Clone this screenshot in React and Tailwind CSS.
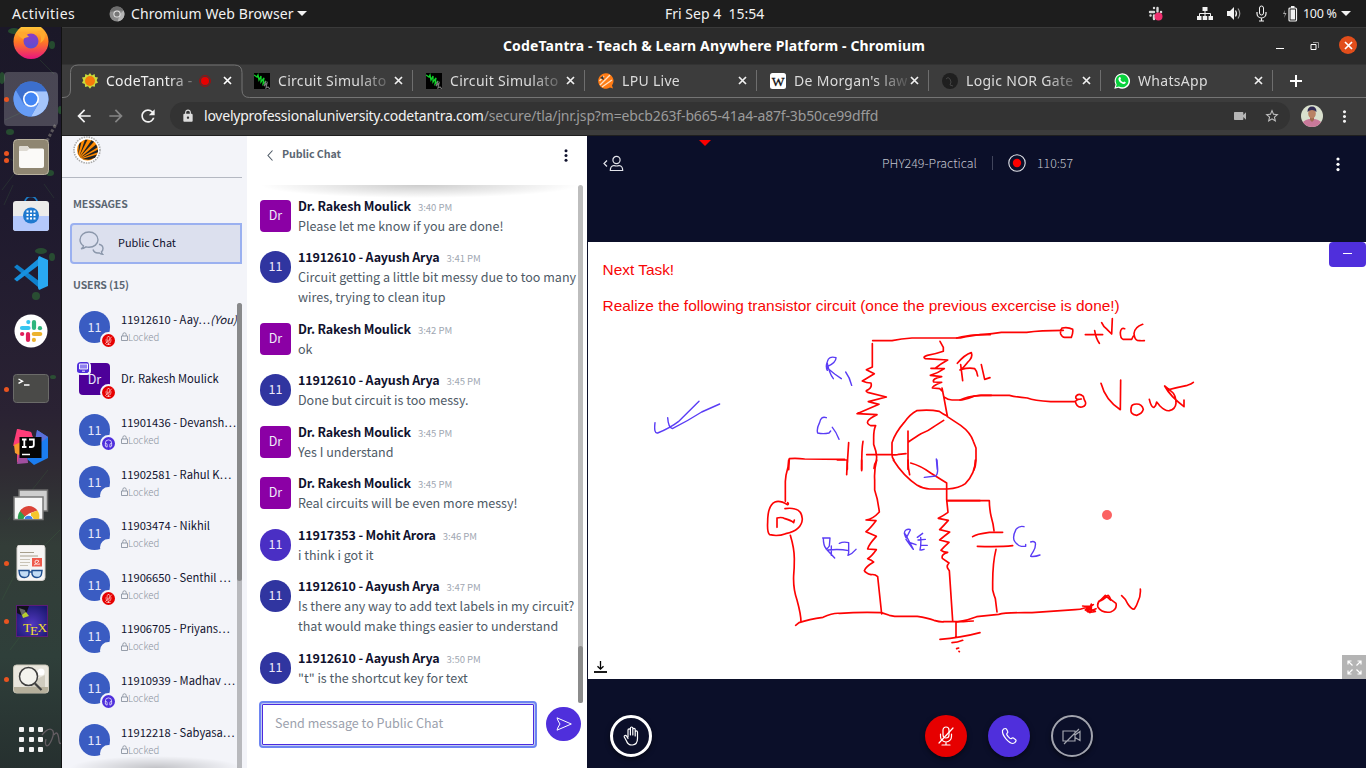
import React from "react";
import { MdArrowBack, MdArrowForward, MdRefresh, MdLock, MdVideocam, MdStarBorder, MdMoreVert } from "react-icons/md";

/* ---------- dock ---------- */
const Cell = ({ children, dots = 0, active }) => (
  <div className="relative flex h-[58px] w-[62px] shrink-0 items-center justify-center">
    {active && <div className="absolute left-1 top-0.5 h-[54px] w-[54px] rounded bg-white/20" />}
    {dots > 0 && (
      <div className="absolute inset-y-0 left-1 flex flex-col items-center justify-center gap-[2px]">
        {Array.from({ length: dots }, (_, i) => (
          <span key={i} className="h-[5px] w-[5px] rounded-full bg-[#e95420]" />
        ))}
      </div>
    )}
    <svg className="relative h-9 w-9" viewBox="0 0 36 36">{children}</svg>
  </div>
);

const Dock = () => (
  <div className="relative w-[62px] shrink-0 overflow-hidden border-r border-[#111] bg-[linear-gradient(180deg,#1b1828_0%,#1f1a2e_25%,#2a2233_52%,#2f2b33_60%,#333d38_70%,#2f3f3a_85%,#26302f_100%)]">
    <svg className="absolute inset-0" width="62" height="741" viewBox="0 27 62 741">
      <g fill="#2f7d35" opacity=".5">
        <ellipse cx="14" cy="31" rx="6" ry="3" /><ellipse cx="52" cy="45" rx="3" ry="4" />
        <ellipse cx="2" cy="78" rx="3" ry="6" /><ellipse cx="60" cy="110" rx="2" ry="4" />
        <ellipse cx="10" cy="132" rx="4" ry="3" /><ellipse cx="50" cy="173" rx="4" ry="3" />
        <ellipse cx="41" cy="251" rx="6" ry="3" /><ellipse cx="52" cy="257" rx="3" ry="4" />
        <ellipse cx="36" cy="296" rx="4" ry="4" /><ellipse cx="53" cy="377" rx="3" ry="2" />
      </g>
      <g stroke="#3e6a3f" strokeWidth="1" opacity=".25" fill="none">
        <path d="M2 190l12-16M5 120l22-10M8 158l16 8M4 205l9-20M40 60l14 14M44 184l10 14M8 520l40-50M2 600l30-60M10 650l30-40M30 560l30-30" />
      </g>
      <path d="M47 141l4-8 5-9" stroke="#827e7a" strokeWidth="3" strokeDasharray="3 2" fill="none" opacity=".6" />
      <path d="M42 735c8-10 14-6 10 4s-8 8-6 0M54 735q4-6 5 6 1 6 4-2" stroke="#7d6f78" strokeWidth="1.300" fill="none" opacity=".7" />
    </svg>
    <div className="relative -mt-[15px] flex flex-col">
      <Cell>
        <defs>
          <linearGradient id="ff" x1="0" y1="0" x2="0" y2="1"><stop offset="0" stopColor="#ffd53d" /><stop offset=".5" stopColor="#ff7a22" /><stop offset="1" stopColor="#e8147f" /></linearGradient>
          <linearGradient id="fp" x1="0" y1="0" x2="0" y2="1"><stop offset="0" stopColor="#8d3cc4" /><stop offset="1" stopColor="#5a4fd0" /></linearGradient>
        </defs>
        <circle cx="18" cy="18.500" r="17.500" fill="url(#ff)" />
        <circle cx="18" cy="18" r="7.500" fill="url(#fp)" />
        <path d="M4 9c5 0 9 1 12 5-3 0-4 1-6 2-2-1-5-3-6-7zM24 8c4 3 5 8 3 12 5-2 6-8 4-13z" fill="#ffa92e" />
      </Cell>
      <Cell dots={1} active>
        <circle cx="18" cy="18" r="17.500" fill="#4d86e8" />
        <path d="M18 .5A17.500 17.500 0 0 0 2.800 9.300L10.500 22 18 10.500h15.800A17.500 17.500 0 0 0 18 .5z" fill="#3c6fcd" />
        <path d="M33.800 10.500H18l7.500 12L18 35.500A17.500 17.500 0 0 0 33.800 10.500z" fill="#a5c5fb" />
        <path d="M2.800 9.300a17.500 17.500 0 0 0 15.200 26.200l6.500-11.500H11z" fill="#669bf5" />
        <circle cx="18" cy="18" r="8" fill="#fff" /><circle cx="18" cy="18" r="6.400" fill="#4285f4" />
      </Cell>
      <Cell dots={2}>
        <rect x=".5" y=".5" width="35" height="35" rx="4" fill="#8f8672" stroke="#b9b29f" />
        <path d="M6 8.500q0-1.500 1.500-1.500h7l2 2.500h13q1.500 0 1.500 1.500v16q0 2-2 2H8q-2 0-2-2z" fill="#fbfaf8" />
        <path d="M6 12V8.500Q6 7 7.500 7h7l2 2.500-2.500 2.500z" fill="#dedad2" />
      </Cell>
      <Cell>
        <path d="M12 5a6 5.500 0 0 1 12 0" fill="none" stroke="#1c7dc8" strokeWidth="1.600" />
        <rect x="0" y="4" width="36" height="30" rx="3" fill="#ecebea" />
        <path d="M0 19h36v12q0 3-3 3H3q-3 0-3-3z" fill="#b4c8fb" />
        <circle cx="18" cy="18.500" r="8" fill="#1f79cf" />
        <g fill="#fff">{[14, 17.500, 21].map((y) => [14, 17.500, 21].map((x) => <rect key={x + "-" + y} x={x - 0.5} y={y - 0.5} width="2" height="2" />))}</g>
      </Cell>
      <Cell>
        <path d="M1 12l3-2.500 24 18v7z" fill="#0f80cc" />
        <path d="M1 24l3 2.500 24-18v-7z" fill="#1791df" />
        <path d="M26 1l9 4v26l-9 4-1-2V3z" fill="#29a9f2" />
      </Cell>
      <Cell>
        <circle cx="18" cy="18" r="16.500" fill="#fff" />
        <g strokeWidth="4.200" strokeLinecap="round">
          <path d="M9 15h6.500" stroke="#36c5f0" /><path d="M15.300 9v.1" stroke="#36c5f0" />
          <path d="M21 9v6" stroke="#2eb67d" /><path d="M26.900 15.200h.1" stroke="#2eb67d" />
          <path d="M20.800 21h6.400" stroke="#ecb22e" /><path d="M20.900 26.900v.1" stroke="#ecb22e" />
          <path d="M15 21v6" stroke="#e01e5a" /><path d="M9.100 21h.1" stroke="#e01e5a" />
        </g>
      </Cell>
      <Cell dots={1}>
        <rect x=".5" y="3.500" width="35" height="28" rx="3" fill="#4a4a48" stroke="#6b6b69" />
        <path d="M5.500 8l4 2.200-4 2.200M11 14h5.500" stroke="#fff" strokeWidth="1.400" fill="none" />
      </Cell>
      <Cell>
        <path d="M4 0l14 3 3 9-17 22z" fill="#e8457f" /><path d="M4 0l14 3 2 6-20 8z" fill="#ff3d78" />
        <path d="M1 16l7-3v14l-6-3z" fill="#f59b2c" /><path d="M6 26l8-4 1 12-11 1z" fill="#a04f9f" />
        <path d="M24 1l11 7v21l-14 7-7-6 8-12z" fill="#1b7df0" /><path d="M24 1l11 7-8 6-5-3z" fill="#5b6fd8" />
        <rect x="6.500" y="8" width="22" height="21" fill="#050505" />
        <path d="M9 10.500h4.500M11.300 10.500v7.500M9 18h4.500M16 10.500h4.800v5.500q0 2-2.400 2H16" stroke="#fff" strokeWidth="1.800" fill="none" />
        <path d="M9 25.500h8" stroke="#fff" strokeWidth="1.500" />
      </Cell>
      <Cell>
        <rect x="6" y="3" width="28.500" height="21" fill="#cfcfcf" stroke="#6c6c6c" strokeWidth="1.500" />
        <rect x="1" y="10" width="29" height="22.500" fill="#f7f7f7" stroke="#777" strokeWidth="1.500" />
        <path d="M5 32a10.500 10.500 0 0 1 2.500-8.500L13 29l-1 3z" fill="#2f9e4f" />
        <path d="M7 24a10.500 10.500 0 0 1 17.500-.5l-8.500 3-4 3z" fill="#db4437" />
        <path d="M24.500 23.500a10.500 10.500 0 0 1 1.500 8.500h-8V26z" fill="#f5c52c" />
        <path d="M10.500 32a5.200 5.200 0 0 1 10 0z" fill="#fff" /><path d="M11.500 32a4.200 4.200 0 0 1 8.200 0z" fill="#3f7de8" />
      </Cell>
      <Cell dots={1}>
        <rect x="4" y="0" width="28" height="35.500" rx="3" fill="#f6f5f4" stroke="#d3d0cb" />
        <path d="M7 7.500h14M7 11h18" stroke="#a79f8c" strokeWidth="1" />
        <path d="M7 14.500h10M7 17.500h10M7 20.500h8" stroke="#c9c3b6" strokeWidth="1" />
        <rect x="19" y="13" width="10" height="8.500" fill="#ee5a4c" />
        <path d="M21 20q3-1 5-4-4-2-4 1t5 2" fill="none" stroke="#fff" strokeWidth=".8" />
        <g fill="#c2dcf5" stroke="#1d4d8e" strokeWidth="1.400"><path d="M6 25.500h10v3.500q-.5 3.500-4.500 3.500T6.500 29zM19 25.500h10l-.5 3.500q-.5 3.500-4.500 3.500T19 29z" /><path d="M16 27h3" /></g>
      </Cell>
      <Cell dots={1}>
        <defs><radialGradient id="tx" cx=".5" cy=".6" r=".7"><stop offset="0" stopColor="#5138c0" /><stop offset="1" stopColor="#19176d" /></radialGradient></defs>
        <rect x="3.500" y="2.500" width="31" height="31" fill="url(#tx)" stroke="#5c1d78" />
        <path d="M4 3h12l-4 11-8-4z" fill="#10101a" /><path d="M6 5l6 2 1 4-4 2z" fill="#666" />
        <path d="M9 12l4-3 3 4-6 2z" fill="#c7e02a" opacity=".9" />
        <g fill="#f2de2b" fontFamily="Liberation Serif, serif" fontSize="13.500"><text x="10" y="28.500">T</text><text x="17" y="32">E</text><text x="24.500" y="28.500">X</text></g>
      </Cell>
      <Cell dots={1}>
        <rect x=".5" y="4" width="35" height="28" rx="3" fill="#e9e6dd" stroke="#cbc6b8" />
        <path d="M1 26h34v3q0 3-3 3H4q-3 0-3-3z" fill="#b6b09c" /><path d="M20 20l12-6v12H18z" fill="#d0ccbf" />
        <circle cx="28" cy="11" r="3.500" fill="#fff" />
        <circle cx="15.500" cy="15.500" r="9" fill="#f4f3ee" stroke="#3f3f3f" strokeWidth="1.500" />
        <path d="M22 22.500l6.500 6.500" stroke="#3f3f3f" strokeWidth="2.200" />
      </Cell>
      <div className="mt-[19px] ml-[19px] grid w-6 grid-cols-3 gap-[5px]">
        {Array.from({ length: 9 }, (_, i) => <span key={i} className="h-[5px] w-[5px] rounded-[1px] bg-[#f2f2f2]" />)}
      </div>
    </div>
  </div>
);

/* ---------- system bar ---------- */
const TopBar = () => (
  <div className="flex h-[27px] shrink-0 items-center bg-[#1d1d1d] pr-[15px] pl-3 text-[14px] leading-[27px] text-[#f2f2f2]">
    <span className="w-[97px] tracking-[0.5px]">Activities</span>
    <svg className="mr-[6px] h-4 w-4" viewBox="0 0 16 16"><circle cx="8" cy="8" r="7.500" fill="#8a8a8a" /><path d="M.8 6A7.500 7.500 0 0 1 14.600 4.500H8z" fill="#6d6d6d" /><path d="M14.600 4.500a7.500 7.500 0 0 1-6 11L11 8z" fill="#b5b5b5" /><circle cx="8" cy="8" r="3.600" fill="#e5e5e5" /><circle cx="8" cy="8" r="2.600" fill="#777" /></svg>
    <span className="w-[166px] tracking-[0.1px]">Chromium Web Browser</span>
    <svg className="h-[5px] w-[10px]" viewBox="0 0 10 5"><path d="M0 0h10L5 5z" fill="#f2f2f2" /></svg>
    <span className="ml-[358px] whitespace-pre">Fri Sep 4  15:54</span>
    <div className="ml-auto flex items-center">
      <svg className="h-4 w-4" viewBox="0 0 16 16"><g stroke="#d8d8d8" strokeWidth="2.400" strokeLinecap="round"><path d="M6 2v.1M2 6h4M9.500 2v3.500M13 6h.1M2.500 9.500h.1M6 9.500v3.500" /></g><circle cx="10.500" cy="10.500" r="4" fill="#ef2f6e" /></svg>
      <svg className="ml-[33px] h-[15px] w-[16px]" viewBox="0 0 16 15"><g fill="#f2f2f2"><rect x="5.500" y="1" width="5" height="4" /><rect x="0" y="10" width="4.500" height="4" /><rect x="5.700" y="10" width="4.500" height="4" /><rect x="11.500" y="10" width="4.500" height="4" /></g><path d="M8 5v5M2.500 10V7.500h11V10" stroke="#f2f2f2" fill="none" /></svg>
      <svg className="ml-[13px] h-[15px] w-[16px]" viewBox="0 0 16 15"><path d="M1 5h3l4-4v13l-4-4H1z" fill="#f2f2f2" /><path d="M9.500 4.500q2 3 0 6" stroke="#f2f2f2" fill="none" strokeWidth="1.200" /><path d="M12 2.500q3.500 5 0 10" stroke="#9a9a9a" fill="none" strokeWidth="1.200" /></svg>
      <svg className="ml-[14px] h-[17px] w-[11px]" viewBox="0 0 11 17"><rect x="3.500" y="1" width="4" height="9" rx="2" fill="none" stroke="#f2f2f2" /><path d="M1 7v1.500a4.500 4.500 0 0 0 9 0V7M5.500 13v3M3 16h5" stroke="#f2f2f2" fill="none" strokeWidth="1.200" /></svg>
      <svg className="ml-[15px] h-4 w-4" viewBox="0 0 16 16"><path d="M3 4L1 8h2l-1 4 2.500-5h-2z" fill="#aaa" /><rect x="7" y="2" width="7.500" height="13" rx="1" fill="none" stroke="#f2f2f2" strokeWidth="1.200" /><rect x="9" y="0" width="3.500" height="2" fill="#f2f2f2" /><rect x="8.500" y="3.500" width="4.500" height="10" fill="#f2f2f2" /></svg>
      <span className="ml-[5px] w-[38px] text-[12.500px] tracking-[-0.3px] whitespace-nowrap">100 %</span>
      <svg className="h-[5px] w-[10px]" viewBox="0 0 10 5"><path d="M0 0h10L5 5z" fill="#f2f2f2" /></svg>
    </div>
  </div>
);

/* ---------- browser chrome ---------- */
const Cross = ({ className }) => (
  <svg className={className} viewBox="0 0 9 9" fill="none" stroke="currentColor" strokeWidth="1.700"><path d="M1 1l7 7M8 1L1 8" /></svg>
);
const CircuitIcon = () => (
  <svg className="h-4 w-4" viewBox="0 0 16 16"><rect width="16" height="16" fill="#000" /><path d="M0 2l3 2 1-2 1 5 2-4 0 6 3-4-1 6 3-3" stroke="#12d02a" strokeWidth="1.300" fill="none" /><path d="M12 8l-2 5 3-3-1 5 2-1 2 2" stroke="#777" strokeWidth="1.200" fill="none" /></svg>
);
const LpuIcon = () => (
  <svg className="h-4 w-4" viewBox="0 0 16 16"><path d="M8 .3a7.700 7.700 0 1 0 4 14.200l3 1-1-3A7.700 7.700 0 0 0 8 .3z" fill="#ff7b14" /><path d="M2 12L12 2M4 14l10-7M1.500 8L6 3" stroke="#ffe2c4" strokeWidth="1.400" /><path d="M2 5l3-2 1 4z" fill="#333" /></svg>
);
const tabs = [
  { t: "Circuit Simulato", icon: <CircuitIcon /> },
  { t: "Circuit Simulato", icon: <CircuitIcon /> },
  { t: "LPU Live", icon: <LpuIcon /> },
  { t: "De Morgan's law", icon: <svg className="h-4 w-4" viewBox="0 0 16 16"><rect width="16" height="16" rx="2.500" fill="#fff" /><text x="8" y="12.500" textAnchor="middle" fontFamily="Liberation Serif, serif" fontSize="13.500" stroke="#111" strokeWidth=".3" fill="#111">W</text></svg> },
  { t: "Logic NOR Gate", icon: <svg className="h-4 w-4" viewBox="0 0 16 16"><circle cx="8" cy="8" r="8" fill="#1f1f1f" /><path d="M4 6q2-3 4 0t0 6l3 1" stroke="#444" fill="none" /></svg> },
  { t: "WhatsApp", icon: <svg className="h-4 w-4" viewBox="0 0 16 16"><path d="M.3 15.800l1.200-4.200A7.700 7.700 0 1 1 4.500 14.700z" fill="#fff" /><path d="M1.900 14.200l.8-2.800a6.400 6.400 0 1 1 2.200 2.100z" fill="#08d13c" /><path d="M5.300 4.200c.9-.5 1.100 0 1.600 1.300.2.600-.5 1-.5 1.200.5 1.200 1.600 2 2.700 2.500.3 0 .8-.9 1.200-.8 1.700.8 1.600.8 1.300 1.600-.6 1-1.800 1.200-3 .8C6.500 10 5 8.400 4.500 6.700c-.2-1 .2-2 .8-2.500z" fill="#fff" /></svg> },
];

const Tab = ({ t, icon }) => (
  <div className="flex h-8 w-[172px] shrink-0 items-center pl-[13px]">
    {icon}
    <div className="ml-2 w-[116px] text-[14px] tracking-[0.3px] whitespace-nowrap text-[#dcdcdc] [mask-image:linear-gradient(90deg,#000_80px,rgba(0,0,0,0.2)_110px)]">{t}</div>
    <Cross className="h-[9px] w-[9px] shrink-0 text-[#f0f0f0]" />
    <div className="ml-auto h-[21px] w-px bg-[#6e6e6e]" />
  </div>
);

const Chrome = () => (
  <div className="flex h-[109px] shrink-0 flex-col">
    <div className="flex h-[37px] items-center border-t border-[#3a3a3a] bg-[#2b2b2b] pr-[9px]">
      <div className="flex-1 pb-px pl-[90px] text-center text-[14px] font-bold tracking-[0.15px] text-white">CodeTantra - Teach &amp; Learn Anywhere Platform - Chromium</div>
      <div className="flex items-center">
        <div className="mt-[5px] h-px w-2 bg-white" />
        <svg className="ml-[26px] h-[9px] w-[9px]" viewBox="0 0 9 9"><path d="M1 2.500h5v5H1z" fill="none" stroke="#fff" /><path d="M3 .5h5.500V6" fill="none" stroke="#999" /></svg>
        <div className="-mt-[2px] ml-[20px] flex h-[18px] w-[18px] items-center justify-center rounded-full bg-[#e24e1b]"><Cross className="h-[9px] w-[9px] text-white" /></div>
      </div>
    </div>
    <div className="relative flex h-[34px] items-center border-t border-[#333] bg-[#3c3c3c] pb-[2px]">
      <svg className="absolute inset-x-0 bottom-0 h-[34px] w-full" fill="none" stroke="#747474"><path d="M0 33.500h1q7.500 0 7.500-7.500V8.500q0-7.500 7.500-7.500H172.500q7.500 0 7.500 7.500V26q0 7.500 7.500 7.500H1304" /></svg>
      <div className="relative flex w-[179px] shrink-0 items-center pl-5">
        <svg className="h-4 w-4" viewBox="0 0 16 16"><path d="M8 0l1.800 2.400L12.600.9l.5 3 2.900.6-1.300 2.700L16 9.800l-2.800.9-.4 3-2.900-.4L8 15.800l-2-2.500-2.900.6-.3-3L0 9.900l1.300-2.600L0 4.600l2.900-.7.4-3 2.800 1.400z" fill="#c9dc3a" /><circle cx="8" cy="8" r="5" fill="#f57a0c" /></svg>
        <div className="ml-2 w-[89px] text-[14px] tracking-[0.25px] whitespace-nowrap text-[#f0f0f0] [mask-image:linear-gradient(90deg,#000_62px,rgba(0,0,0,0.25)_88px)]">CodeTantra -</div>
        <svg className="ml-[4px] h-3 w-3" viewBox="0 0 12 12"><circle cx="6" cy="6" r="5.400" fill="none" stroke="#a30d0d" /><circle cx="6" cy="6" r="4" fill="#e80000" /></svg>
        <Cross className="ml-[12px] h-[9px] w-[9px] text-white" />
      </div>
      <div className="relative flex items-center">
        {tabs.map((x, i) => <Tab key={i} {...x} />)}
        <svg className="ml-[17px] h-3 w-3" viewBox="0 0 12 12" stroke="#fff" strokeWidth="2"><path d="M6 0v12M0 6h12" /></svg>
      </div>
    </div>
    <div className="flex h-[38px] items-center border-b border-[#1f1f1f] bg-[#3c3c3c] pb-px pl-3">
      <MdArrowBack className="h-5 w-5 text-[#f2f2f2]" />
      <MdArrowForward className="ml-3 h-5 w-5 text-[#858585]" />
      <MdRefresh className="ml-3 h-5 w-5 text-[#f2f2f2]" />
      <div className="ml-3 flex h-7 w-[1120px] items-center rounded-full bg-[#333] pl-[11px]">
        <MdLock className="h-[14px] w-[14px] text-[#dcdcdc]" />
        <div className="ml-[9px] flex-1 pb-px text-[14px] tracking-[-0.15px] whitespace-nowrap text-[#9b9b9b]"><span className="tracking-[-0.23px] text-[#f2f2f2]">lovelyprofessionaluniversity.codetantra.com</span>/secure/tla/jnr.jsp?m=ebcb263f-b665-41a4-a87f-3b50ce99dffd</div>
        <MdVideocam className="h-4 w-4 text-[#b5b5b5]" />
        <MdStarBorder className="mr-[10px] ml-4 h-4 w-4 text-[#c0c0c0]" />
      </div>
      <svg className="ml-[11px] h-[22px] w-[22px]" viewBox="0 0 22 22"><defs><clipPath id="av"><circle cx="11" cy="11" r="11" /></clipPath></defs><g clipPath="url(#av)"><rect width="22" height="22" fill="#d9e0cd" /><path d="M0 22q1-7 8-8h6q7 1 8 8z" fill="#c9799a" /><path d="M9 12h4v3l-2 2-2-2z" fill="#a06a50" /><ellipse cx="11" cy="8.500" rx="3.800" ry="5" fill="#b98264" /><path d="M6.500 7q0-5.500 4.500-5.500T15.500 7q-2-2-4.500-2T6.500 7z" fill="#322c55" /></g></svg>
      <MdMoreVert className="ml-[12px] h-[19px] w-[19px] text-[#f2f2f2]" />
    </div>
  </div>
);

/* ---------- conference: users ---------- */
const MicOff = ({ className }) => (
  <svg className={className} viewBox="0 0 20 20" fill="none" stroke="currentColor" strokeWidth="1.200" strokeLinecap="round"><rect x="7" y="1" width="6" height="11" rx="3" /><path d="M4.500 8v2.500a5.500 5.500 0 0 0 11 0V8M10 16v3M6 19h8M3 17L17 2" /></svg>
);
const Headset = ({ className }) => (
  <svg className={className} viewBox="0 0 20 20" fill="none" stroke="currentColor" strokeWidth="1.500"><path d="M3 15V9a7 7 0 0 1 14 0v6M3 10q4-1 4 3v5q-4 0-4-4M17 10q-4-1-4 3v5q4 0 4-4" /></svg>
);
const users = [
  { n: "11912610 - Aay…", you: true, b: "mic" },
  { n: "Dr. Rakesh Moulick", mod: true, b: "mic" },
  { n: "11901436 - Devansh…", b: "hs" },
  { n: "11902581 - Rahul K…", b: "no" },
  { n: "11903474 - Nikhil", b: "no" },
  { n: "11906650 - Senthil …", b: "mic" },
  { n: "11906705 - Priyans…", b: "no" },
  { n: "11910939 - Madhav …", b: "hs" },
  { n: "11912218 - Sabyasa…", b: "no" },
];
const UserRow = ({ n, you, mod, b }) => (
  <div className="flex h-[51.600px] shrink-0 items-center pl-[17px]">
    <div className={"relative flex h-8 w-[31px] shrink-0 items-center justify-center text-[12.500px] text-[#e6e9fa] " + (mod ? "rounded bg-[#4d0099]" : "rounded-full bg-[#3a5cc2]")}>
      {mod ? "Dr" : "11"}
      {mod && (
        <div className="absolute -top-[1px] -left-[2px] flex h-[13px] w-[14px] items-center justify-center rounded-[4px] border-r-2 border-b-2 border-[#f3f4f9] bg-[#4f2fdc]">
          <svg className="h-[9px] w-[9px]" viewBox="0 0 9 9" fill="#8f80ee" stroke="#fff" strokeWidth=".9"><path d="M.5 1h8v5h-8zM3 8.200h3" /></svg>
        </div>
      )}
      <div className={"absolute -right-[7px] -bottom-[6px] flex h-[17px] w-[17px] items-center justify-center rounded-full border-2 border-[#f3f4f9] text-white " + (b === "mic" ? "bg-[#e60000]" : b === "hs" ? "bg-[#4f2fdc]" : "bg-[#f3f4f9]")}>
        {b === "mic" && <MicOff className="h-[9px] w-[9px]" />}
        {b === "hs" && <Headset className="h-[9px] w-[9px]" />}
      </div>
    </div>
    <div className="ml-[11px] flex flex-col whitespace-nowrap">
      <div className="text-[11.200px] leading-[17px] text-[#10122e]">{n}{you && <i>(You)</i>}</div>
      {!mod && (
        <div className="mt-[1px] -mb-[1px] flex items-center text-[9.600px] leading-[16px] font-light text-[#8b93a0]">
          <svg className="h-[9px] w-[7px]" viewBox="0 0 7 9" fill="none" stroke="#8b93a0" strokeWidth=".9"><path d="M.5 4h6v4.500h-6zM1.800 4V2.500q0-1.700 1.700-1.700t1.700 1.700V4" /></svg>Locked
        </div>
      )}
    </div>
  </div>
);

const Users = () => (
  <div className="relative flex w-[185px] shrink-0 flex-col overflow-hidden bg-[#f3f4f9]">
    <div className="mr-[5px] h-[42px] shrink-0 border-b border-[#b4b8c2] pl-[11px]">
      <svg className="h-[28px] w-7" viewBox="0 0 28 28"><circle cx="14" cy="14" r="13" fill="#fff" stroke="#a9a9a9" strokeWidth="1.600" strokeDasharray="1.500 1" /><circle cx="14.500" cy="14" r="10.500" fill="#ff8a00" /><path d="M6 21L12 3.800l2.500 0zM6.500 21.500L18.500 4.300l2.500 1.500zM7 22L23 8.500l1.300 3zM7.500 22.500L25 13.500l0 2.800zM9 23l15-4.500-2 3.200-6 2zM5 19.500L6 8l2.500-2z" fill="#222" /></svg>
    </div>
    <div className="mt-[16px] pl-[11px] text-[10.500px] leading-5 font-bold tracking-[-0.1px] text-[#5b6672]">MESSAGES</div>
    <div className="mt-[9px] mr-[5px] ml-2 flex h-[41px] shrink-0 items-center rounded-l border-2 border-[#9ab0f0] bg-[#dce0ee] pl-[7px]">
      <svg className="h-[25px] w-[25px]" viewBox="0 0 25 25" fill="none" stroke="#8b97ab" strokeWidth="1.400"><path d="M4.500 14.800Q1 12.500 1 8.700C1 4.300 5 1 10 1s9 3.300 9 7.700-4 7.500-9 7.500q-2 0-3-.4Q4.500 17.500 2 17.800q2.500-1 2.500-3zM20 13.200q4 1 4 4.300 0 2-1.500 3.200 0 1.500 1 2.500-2 0-3.200-1.300-5 .7-6.300-3.400" /></svg>
      <span className="ml-[14px] pb-[2px] text-[10.900px] text-[#10122e]">Public Chat</span>
    </div>
    <div className="mt-[11px] pl-[11px] text-[10.500px] leading-5 font-bold tracking-[-0.1px] text-[#5b6672]">USERS (15)</div>
    <div className="mt-[6.500px] flex min-h-0 flex-1 flex-col">
      {users.map((u) => <UserRow key={u.n} {...u} />)}
    </div>
    <div className="absolute top-[167px] right-[5px] bottom-0 w-[5px] rounded-t bg-[#b8b9bd]"><div className="h-[278px] rounded bg-[#88898b]" /></div>
    <div className="absolute right-[5px] bottom-0 left-[8px] h-[12px] bg-[radial-gradient(farthest-side_at_50%_100%,rgba(0,0,0,0.2),transparent)]" />
  </div>
);

/* ---------- conference: chat ---------- */
const DR = "Dr. Rakesh Moulick";
const AA = "11912610 - Aayush Arya";
const msgs = [
  [DR, "3:40 PM", ["Please let me know if you are done!"]],
  [AA, "3:41 PM", ["Circuit getting a little bit messy due to too many", "wires, trying to clean itup"]],
  [DR, "3:42 PM", ["ok"]],
  [AA, "3:45 PM", ["Done but circuit is too messy."]],
  [DR, "3:45 PM", ["Yes I understand"]],
  [DR, "3:45 PM", ["Real circuits will be even more messy!"]],
  ["11917353 - Mohit Arora", "3:46 PM", ["i think i got it"]],
  [AA, "3:47 PM", ["Is there any way to add text labels in my circuit?", "that would make things easier to understand"]],
  [AA, "3:50 PM", ['"t" is the shortcut key for text']],
];

const Message = ({ m: [name, time, lines] }) => (
  <div className="mb-[11.500px] flex">
    <div className={"flex h-8 w-[31px] shrink-0 items-center justify-center pb-px text-[12.500px] text-[#eeeaf8] " + (name === DR ? "rounded bg-[#8b00a5]" : name === AA ? "rounded-full bg-[#3035a0]" : "rounded-full bg-[#4a2fc4]")}>
      {name === DR ? "Dr" : "11"}
    </div>
    <div className="-mt-[4px] ml-[7px] whitespace-nowrap">
      <div className="flex h-5 items-baseline leading-5"><span className="text-[12.500px] font-bold tracking-[-0.16px] text-[#10122e]">{name}</span><span className="ml-[7px] text-[9.500px] text-[#a0a7b2]">{time}</span></div>
      {lines.map((l) => <div key={l} className="h-5 text-[12.540px] leading-5 text-[#4e5a66]">{l}</div>)}
      <div className="h-[4px]" />
    </div>
  </div>
);

const Chat = () => (
  <div className="relative flex w-[341px] shrink-0 flex-col border-r border-[#0b0f29] bg-white">
    <div className="flex h-[39px] shrink-0 items-center pr-[15px] pl-[20px]">
      <svg className="h-[11px] w-[6px]" viewBox="0 0 6 11" fill="none" stroke="#4e5a66" strokeWidth="1.100"><path d="M5.500.5l-4.500 5 4.500 5" /></svg>
      <span className="ml-[9px] flex-1 pb-[2px] text-[10.700px] font-bold tracking-[-0.1px] text-[#5b6672]">Public Chat</span>
      <svg className="h-[13px] w-[12px]" viewBox="0 0 12 13" fill="#10122e"><circle cx="6" cy="1.700" r="1.500" /><circle cx="6" cy="6.500" r="1.500" /><circle cx="6" cy="11.300" r="1.500" /></svg>
    </div>
    <div className="relative mt-[10px] mr-[3px] ml-[13px] h-[518px] shrink-0">
      <div className="absolute top-0 right-[5px] left-0 h-[13px] bg-[radial-gradient(farthest-side_at_50%_0,rgba(0,0,0,0.2),transparent)]" />
      <div className="relative pt-[14.800px]">{msgs.map((m, i) => <Message key={i} m={m} />)}</div>
      <div className="absolute top-0 right-[1px] flex h-[518px] w-[5px] flex-col justify-end rounded bg-[#bdbdbd]"><div className="h-[57px] rounded bg-[#8b8b8b]" /></div>
    </div>
    <div className="-mt-[2px] ml-[12px] flex items-center">
      <div className="h-[47px] w-[278px] rounded border-[2px] border-[#6d85f2] bg-[#c3cbf0] p-px">
        <div className="flex h-full items-center rounded-[1px] border border-[#4a2be0] bg-white pb-[3px] pl-[12px] text-[12.540px] text-[#9ba1ad]">Send message to Public Chat</div>
      </div>
      <div className="mb-px ml-[9px] flex h-[34px] w-[35px] items-center justify-center rounded-full bg-[#4f2fdc]">
        <svg className="h-[14px] w-[16px]" viewBox="0 0 16 14" fill="none" stroke="#fff" strokeLinejoin="round"><path d="M1 .8L15.300 7 1 13.200l1.200-3.200L4 7 2.200 4z" /></svg>
      </div>
    </div>
  </div>
);

/* ---------- conference: whiteboard ---------- */
const Circuit = () => (
  <svg className="absolute inset-0 h-full w-full" viewBox="0 0 778 437" fill="none" stroke="#fd0303" strokeLinecap="round" strokeLinejoin="round">
    <g transform="translate(2 -12) scale(.33333)" strokeWidth="5">
      <path d="M848 332h58q28-6 60-8h145q35-8 60-10h30M847 341v70l-18 8 24 12-36 22q12 6 26 6 4 12-8 20-12 4-2 8l56 14-54 14 32 8-66 28 60 3q-46 22-18 33h14q-6 12-6 36v20q8 20 9 38l-1 12q-6 8-7 22M1050 334l10 18v12q-22 8-48 12-16 5-6 10l67 4q-22 12-36 24l-14 1 40 1q-20 14-42 20l34 4q-30 6-24 16l24 1q-30 12-28 17l22 2 10 10M1056 474l6 30 10 54M1064 502q10 8 22 8h30q20-4 38-12l20-2h30" />
      <path d="M1072 558q-14-6-24-14-30-6-68-2-20 10-38 36-26 30-36 60v36q0 10 6 16M1072 560l40 26q30 22 38 48l8 20v38q-1 16-6 28M954 603v115M1061 571l-28 18q-18 14-40 22-14 8-38 25M830 674h76q14 2 20-1l22-2M776 638l-4 62v18M819 634q-4 20-4 84M596 719l2-33q20-2 46 1l120 1" />
      <path d="M1102 400q22-26 42-32 6 14-12 30-12 16-22 22M1112 404l6 48M1114 418q24-6 40-2 8 8 9 22M1174 404l10 44 16-5" />
      <path stroke="#5a3df5" strokeWidth="4.200" d="M195 578q-4 34 8 31 36-14 62-34l62-61M233 563q2 30 14 33 44-22 88-50l54-24M738 383q-22-6-26 12-6 14 0 26M738 384q0 14-26 26M712 400q6 30 18 46M712 414l22 18 20 14M767 426q12 16 18 40M709 563q-16-6-20 14-10 20-6 32 16 4 34 0l5-6M727 592q12 14 20 36M1039 687l3 31" />
    </g>
    <g transform="translate(372 -12) scale(.33333)" strokeWidth="5">
      <path d="M-10 324q32-8 54-9 20 0 80-8h76q40-6 110-6M306 294q-6 8-4 18 6 12 14 10h18q6-14 4-24-14-8-32-4zM376 314h52M404 302q4 24 14 38M425 278q6 14 16 20l14 14 2-46M494 296q-12-4-13 12 0 16 8 20h26l5-10M548 283q-24 8-26 28 2 18 10 20 10 2 21 1" />
      <path d="M0 510q20-10 60-14h88q24 6 54 8 20 8 70 11h72M346 514q4 20 20 17 14-4 10-16-4-6-6-16-14-12-22 0-4 12 16 8-12 0-18 7zM423 460q14 52 58 79l1-89M514 532q-6 22 16 24 16-4 20-18-4-16-20-16-16 0-16 10zM568 508q6 26 14 24 6-4 8-16l10 12q16 16 28 14 18-4 20-22 0-26-14-36l-20-16q16 30 58 62v-20M622 480q30-8 60-14 12-4 18-9" />
    </g>
    <g transform="translate(152 218) scale(.33333)" strokeWidth="5">
      <path d="M146 0q0 20-8 46l-2 18v60M143 128q4 4 0 6-24-14-38-8-22 10-22 60-2 32 6 38 24 6 48-3 48-10 50-44-2-26-22-30-14-4-30-1M111 202v-28q14-4 24 2 20 6 26 12l2-8M151 226q12 40 12 70 0 30-2 50-2 40 10 74 12 44 12 66M167 496l10-8q30-10 72-16 30-14 50-12 60-4 125-2l24 8 16 3h68q30 4 50 12 22 6 30 4h58q18-2 30-2M648 486v46M600 538q60-4 120-20M636 548q16 0 32-7M650 566l6-2M657 574l1 1M410 0q-8 30-6 60v30q10 28 14 66-20 22-40 24l30 2q-18 24-30 33l31 14q-24 26-26 38l26 2q-16 22-26 27 12 4 18 10-24 14-28 26 4 8 20 12 12-2 20 6l12 112" />
      <path d="M460 0q30 48 72 76 20 12 40 11h50q36-2 54-16Q706 40 706 0M504 0q0 26 5 44M512 9q30 8 60 30l48 30v50l4 38q-14 10-29 18l30 6q-14 16-26 28l30 7q-16 12-30 24l28 7q-16 14-24 24 8 6 20 6-20 6-16 18l20 14q-8 8-4 16l5 7 10 150M622 122h98M322 2l-2 42M292 0h30M365 0v32" />
      <path stroke="#5a3df5" strokeWidth="4.200" d="M591 0l2 28q0 16-6 20l-34 4M248 234h22l-2 24q-4 8-10 8-8-10-8-32M258 266l26 28M264 270q34-4 62 2M274 258v28M298 250q12-6 28-2v30l-2 8q12-4 24-18M510 208q-16-2-17 12 4 14 6 14l12-24M496 222l24 46M498 238l20 28M504 246l24 8M532 232l16-12M540 270q4-20 2-38M534 240l22-2M544 256h18M544 270l8-2" />
    </g>
    <g transform="translate(352 218) scale(.33333)" strokeWidth="5">
      <path d="M22 122h126q0 24 6 50 6 20 8 40M98 230q10-8 50-13h40M112 259q70 2 106-2M168 268q-10 40-10 100v22q4 16 8 26l5 40M50 486q30-4 60-16l66-7q20-6 100-5l130-9q14 0 30-6M428 438q20 4 32-4l-24 16q10 10 30 4l-28-12 12 16q6-10 4-26l-10 24 24-10M476 424q12-2 28-18 4 2 8 12l16 12q4 18-16 26-26 4-38-14-4-14 8-22l14-14 16 14M545 407q14 12 18 24 12 18 20 16 8-12 10-20 10-20 8-40" />
      <path stroke="#5a3df5" strokeWidth="4.200" d="M252 200q-14-4-24 8-12 24-4 36 10 14 20 15h13v-6M272 246q8-4 14 2 2 14-6 26-8 12-8 15 12 2 28-4" />
    </g>
    <circle cx="519" cy="273" r="5" fill="#fb6262" stroke="none" />
  </svg>
);

const Round = ({ className, children }) => (
  <div className={"flex h-[42px] w-[42px] items-center justify-center rounded-full shadow-[0_2px_5px_rgba(0,0,0,0.5)] " + className}>{children}</div>
);

const Main = () => (
  <div className="flex min-w-0 flex-1 flex-col bg-[#0b0f29]">
    <div className="relative flex h-[106px] shrink-0 items-start pt-[17px] pl-[14px]">
      <svg className="absolute top-[4px] left-[111px] h-[6px] w-3" viewBox="0 0 12 6"><path d="M0 0h12L6 6z" fill="#fb0000" /></svg>
      <svg className="mt-[2px] h-[17px] w-[22px]" viewBox="0 0 22 17" fill="none" stroke="#e3e4ea" strokeWidth="1.200"><path d="M5 5.500L2 8.500l3 3" /><circle cx="14.500" cy="5" r="3.600" /><path d="M8.300 15.500q0-4.500 3.500-5 2.700 1 5.400 0 3.500.5 3.500 5z" /></svg>
      <div className="ml-[258px] flex h-5 items-center text-[12.400px] font-light text-[#c3c5cf]">
        <span className="w-[97px] whitespace-nowrap">PHY249-Practical</span>
        <span className="ml-[13px] h-[14px] w-px bg-[#41455c]" />
        <svg className="ml-[15px] h-[18px] w-[18px]" viewBox="0 0 18 18"><circle cx="9" cy="9" r="8.200" fill="none" stroke="#e3e4ea" strokeWidth="1.100" /><circle cx="9" cy="9" r="4.200" fill="#fb0000" /></svg>
        <span className="ml-[11px] text-[12.300px]">110:57</span>
      </div>
      <svg className="mt-[4px] mr-[22px] ml-auto h-[15px] w-[12px]" viewBox="0 0 12 15" fill="#fff"><circle cx="6" cy="2" r="1.600" /><circle cx="6" cy="7.300" r="1.600" /><circle cx="6" cy="12.600" r="1.600" /></svg>
    </div>
    <div className="relative h-[437px] shrink-0 bg-white font-[Liberation_Sans,sans-serif] text-[15.410px] leading-[18px] text-[#f80606]">
      <div className="pt-[19px] pl-[14.500px]">Next Task!</div>
      <div className="pt-[18px] pl-[14.500px]">Realize the following transistor circuit (once the previous excercise is done!)</div>
      <Circuit />
      <div className="absolute top-0 right-0 flex h-[25px] w-[37px] items-center justify-center rounded-sm bg-[#4f2fdc]"><div className="-mt-[2px] h-px w-[9px] bg-white" /></div>
      <svg className="absolute bottom-[5px] left-[5px] h-[13px] w-[14px]" viewBox="0 0 14 13" fill="none" stroke="#000"><path d="M7.500 0v8M4.500 5.200l3 3 3-3" strokeWidth="1.300" /><path d="M1 11h13" strokeWidth="1.800" /></svg>
      <div className="absolute right-0 bottom-0 flex h-6 w-6 items-center justify-center bg-[#b4b4b4]">
        <svg className="h-[15px] w-[15px]" viewBox="0 0 15 15" fill="none" stroke="#fff" strokeWidth="1.200"><path d="M1 4.500V1h3.500M1 1l4.500 4.500M10.500 1H14v3.500M14 1L9.500 5.500M1 10.500V14h3.500M1 14l4.500-4.500M14 10.500V14h-3.500M14 14L9.500 9.500" /></svg>
      </div>
    </div>
    <div className="flex flex-1 items-start pt-[36px] pl-[22px]">
      <Round className="border-[3px] border-white">
        <svg className="h-[20px] w-[18px]" viewBox="0 0 18 20" fill="none" stroke="#fff" strokeWidth="1.200" strokeLinecap="round" strokeLinejoin="round"><path d="M6 11V4q0-1.200 1.200-1.200T8.400 4v5M8.400 8V2.200Q8.400 1 9.600 1t1.200 1.200V9M10.800 9V3.500q0-1.200 1.200-1.200t1.200 1.200V10M13.200 10V6q0-1.200 1.100-1.200T15.500 6v6.500q0 6-5 6.500-4.500.3-6-4L2.300 11q-.4-1.200.8-1.500 1-.2 1.500.8L6 12.500" /></svg>
      </Round>
      <Round className="ml-[273px] bg-[#e60000]"><MicOff className="h-[20px] w-[20px] text-white" /></Round>
      <Round className="ml-[21px] bg-[#4f2fdc]"><svg className="h-[18px] w-[18px]" viewBox="0 0 18 18" fill="none" stroke="#fff" strokeWidth="1.200" strokeLinejoin="round"><path d="M2.500 3.500q1-2 2.700-2 1 0 1.500 1l1 2q.5 1-.8 2Q6 7 8.200 9.700q2.200 2.500 3 2 1.200-1.200 2.200-.6l2 1.300q1 .7.600 1.600-1 2.400-3 2.500-3 0-7-4.700T2.500 3.500z" /></svg></Round>
      <Round className="ml-[21px] border-[2.500px] border-[#a2a4ae]"><svg className="h-[18px] w-[20px]" viewBox="0 0 20 18" fill="none" stroke="#a2a4ae" strokeWidth="1.200"><path d="M1 4h12v10H1zM13 8l5-3.500v9L13 10.500M2 17L17 2" /></svg></Round>
    </div>
  </div>
);

export default function App() {
  return (
    <div className="flex h-screen w-screen flex-col overflow-hidden bg-black font-[Noto_Sans,sans-serif]">
      <TopBar />
      <div className="flex min-h-0 flex-1">
        <Dock />
        <div className="flex min-w-0 flex-1 flex-col">
          <Chrome />
          <div className="flex min-h-0 flex-1 font-['Noto_Sans_CJK_SC',sans-serif]">
            <Users />
            <Chat />
            <Main />
          </div>
        </div>
      </div>
    </div>
  );
}
